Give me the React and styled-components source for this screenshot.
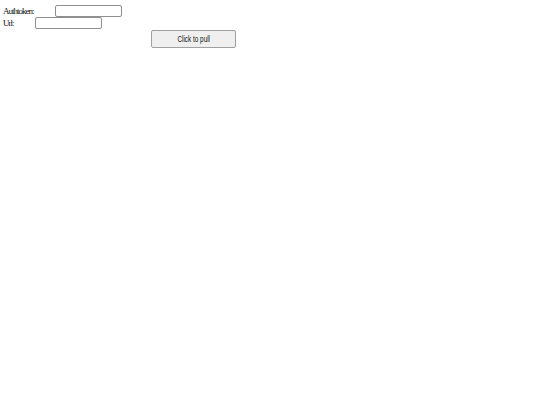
import React from "react";
import { styled, createGlobalStyle } from "styled-components";

const GlobalStyle = createGlobalStyle`
  html, body {
    margin: 0;
    padding: 0;
    background: #ffffff;
  }
  body {
    font-family: "Liberation Serif", "Times New Roman", serif;
  }
`;

const App = () => {
  return (
    <>
      <GlobalStyle />
      <Page>
        <Row>
          <Label>Authtoken:</Label>
          <Field type="text" />
        </Row>
        <Row>
          <Label>Url:</Label>
          <Field type="text" />
        </Row>
        <PullButton type="button">
          <ButtonText>Click to pull</ButtonText>
        </PullButton>
      </Page>
    </>
  );
};

export default App;

const Page = styled.div`
  display: flex;
  flex-direction: column;
  align-items: flex-start;
  padding: 5px 0 0 3px;
`;

const Row = styled.div`
  display: flex;
  align-items: center;
  gap: 21px;
  height: 12px;
`;

const Label = styled.span`
  font-family: "Liberation Serif", "Times New Roman", serif;
  font-size: 9px;
  letter-spacing: -1px;
  color: #111;
  line-height: 12px;
`;

const Field = styled.input`
  box-sizing: border-box;
  width: 67px;
  height: 12px;
  margin: 0;
  padding: 0 2px;
  border: 1px solid #8f8f8f;
  border-radius: 2px;
  background: #fff;
  font-size: 7px;
  outline: none;
`;

const PullButton = styled.button`
  box-sizing: border-box;
  display: flex;
  align-items: center;
  justify-content: center;
  width: 85px;
  height: 18px;
  margin: 1px 0 0 148px;
  padding: 0;
  border: 1px solid #a0a0a0;
  border-radius: 2px;
  background: #efefef;
  color: #111;
  cursor: pointer;
`;

const ButtonText = styled.span`
  display: inline-block;
  font-family: "Liberation Sans", Arial, sans-serif;
  font-size: 8.5px;
  transform: scaleX(0.75);
  white-space: nowrap;
`;
